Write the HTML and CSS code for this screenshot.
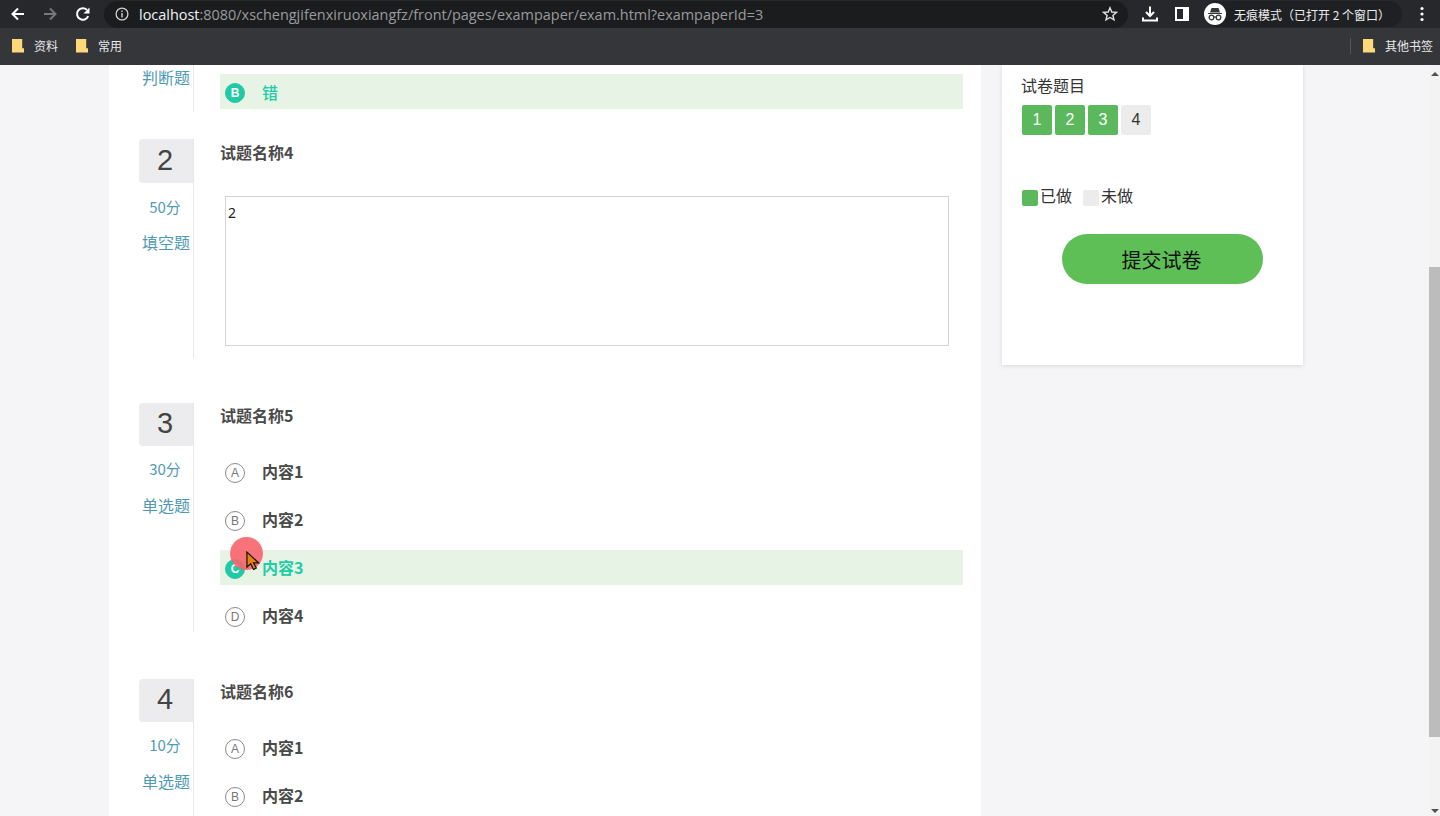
FILE: index.html
```html
<!DOCTYPE html>
<html lang="en">
<head>
  <meta charset="UTF-8">
  <title>exam</title>
  <link rel="stylesheet" href="styles.css">
</head>
<body>

  <div class="toolbar">
    <svg class="nav-icon" viewBox="0 0 16 16"><path d="M14 8H3M8 2.5 2.5 8 8 13.5" fill="none" stroke="#fff" stroke-width="2"/></svg>
    <svg class="nav-icon" viewBox="0 0 16 16"><path d="M2 8h11M8 2.5 13.5 8 8 13.5" fill="none" stroke="#77787b" stroke-width="2"/></svg>
    <svg class="nav-icon" viewBox="0 0 16 16"><path d="M13.2 10.2A5.8 5.8 0 1 1 12 3.9" fill="none" stroke="#fff" stroke-width="2"/><path d="M14.5 1.5v6h-6z" fill="#fff"/></svg>
    <div class="address">
      <svg class="info-icon" viewBox="0 0 14 14"><circle cx="7" cy="7" r="5.9" fill="none" stroke="#d0d1d3" stroke-width="1.3"/><path d="M6.3 6h1.4v4.4H6.3zM6.3 3.5h1.4v1.4H6.3z" fill="#d0d1d3"/></svg>
      <span class="url"><b>localhost</b>:8080/xschengjifenxiruoxiangfz/front/pages/exampaper/exam.html?exampaperId=3</span>
      <svg class="star-icon" viewBox="0 0 16 16"><path d="M8 1.8 9.8 6l4.6.4-3.5 3 1.1 4.5L8 11.5l-4 2.4 1.1-4.5-3.5-3L6.200 6z" fill="none" stroke="#dfe0e2" stroke-width="1.400"/></svg>
    </div>
    <svg class="tool-icon" viewBox="0 0 18 18"><path d="M9 1.500v9M5 7l4 4 4-4M2 12.500v3h14v-3" fill="none" stroke="#fff" stroke-width="2"/></svg>
    <svg class="tool-icon" viewBox="0 0 18 18"><path d="M3 3h12v12H3z" fill="none" stroke="#fff" stroke-width="2"/><path d="M10 3h5v12h-5z" fill="#fff"/></svg>
    <div class="incognito">
      <span class="incognito-face">
        <svg viewBox="0 0 20 20" width="20" height="20"><path d="M6.500 4h7l1.500 4.500H5zM3 9h14v1H3z" fill="#35363a"/><circle cx="6.500" cy="13.500" r="2.300" fill="none" stroke="#35363a" stroke-width="1.300"/><circle cx="13.500" cy="13.500" r="2.300" fill="none" stroke="#35363a" stroke-width="1.300"/><path d="M8.800 13h2.400" stroke="#35363a" stroke-width="1.200"/></svg>
      </span>
      <span>无痕模式（已打开 2 个窗口）</span>
    </div>
    <svg class="menu-icon" viewBox="0 0 4 16"><circle cx="2" cy="2.500" r="1.600" fill="#fff"/><circle cx="2" cy="8" r="1.600" fill="#fff"/><circle cx="2" cy="13.500" r="1.600" fill="#fff"/></svg>
  </div>

  <div class="bookmarks">
    <div class="bookmark"><i class="folder"></i>资料</div>
    <div class="bookmark"><i class="folder"></i>常用</div>
    <div class="bookmarks-right">
      <span class="divider"></span>
      <div class="bookmark"><i class="folder"></i>其他书签</div>
    </div>
  </div>

  <div class="viewport">
    <div class="page">
      <div class="main-card">

        <div class="question question-cut">
          <div class="q-side q-side-cut">
            <div class="q-type">判断题</div>
          </div>
          <div class="q-body">
            <div class="option option-first selected"><span class="letter">B</span><span class="option-text">错</span></div>
          </div>
        </div>

        <div class="question">
          <div class="q-side q-side-text">
            <div class="q-num">2</div>
            <div class="q-score">50分</div>
            <div class="q-type">填空题</div>
          </div>
          <div class="q-body">
            <div class="q-title q-title-text">试题名称4</div>
            <div class="answer-box">2</div>
          </div>
        </div>

        <div class="question">
          <div class="q-side">
            <div class="q-num">3</div>
            <div class="q-score">30分</div>
            <div class="q-type">单选题</div>
          </div>
          <div class="q-body">
            <div class="q-title">试题名称5</div>
            <div class="options">
              <div class="option"><span class="letter">A</span><span class="option-text">内容1</span></div>
              <div class="option"><span class="letter">B</span><span class="option-text">内容2</span></div>
              <div class="option selected"><span class="letter">C</span><span class="option-text">内容3</span></div>
              <div class="option"><span class="letter">D</span><span class="option-text">内容4</span></div>
            </div>
          </div>
        </div>

        <div class="question">
          <div class="q-side">
            <div class="q-num">4</div>
            <div class="q-score">10分</div>
            <div class="q-type">单选题</div>
          </div>
          <div class="q-body">
            <div class="q-title">试题名称6</div>
            <div class="options">
              <div class="option"><span class="letter">A</span><span class="option-text">内容1</span></div>
              <div class="option"><span class="letter">B</span><span class="option-text">内容2</span></div>
            </div>
          </div>
        </div>

      </div>

      <div class="side-card">
        <div class="side-title">试卷题目</div>
        <div class="num-list">
          <span class="num done">1</span>
          <span class="num done">2</span>
          <span class="num done">3</span>
          <span class="num">4</span>
        </div>
        <div class="legend">
          <i class="swatch done"></i><span>已做</span>
          <i class="swatch todo"></i><span>未做</span>
        </div>
        <button class="submit-btn">提交试卷</button>
      </div>
    </div>

    <div class="scrollbar">
      <span class="arrow-up"></span>
      <span class="thumb"></span>
      <span class="arrow-down"></span>
    </div>

    <!-- screen recorder pointer -->
    <div class="pointer-dot"></div>
    <svg class="pointer" viewBox="0 0 16 22"><path d="M1 1v16l4-3.500 3 6 3-1.500-3-5.500h5.500z" fill="#e8820c" stroke="#111" stroke-width="1.300"/></svg>
  </div>

</body>
</html>
```

FILE: styles.css
```css
* {
  box-sizing: border-box;
}

html, body {
  height: 100%;
}

body {
  margin: 0;
  display: flex;
  flex-direction: column;
  overflow: hidden;
  font-family: "Noto Sans CJK SC", "Liberation Sans", sans-serif;
  background: #f5f5f7;
}

/* browser chrome */
.toolbar {
  display: flex;
  align-items: center;
  height: 28px;
  padding-left: 10px;
  background: #27282b;
}

.nav-icon {
  width: 16px;
  height: 16px;
  margin-right: 17px;
}

.nav-icon:first-child {
  margin-right: 16px;
}

.address {
  display: flex;
  align-items: center;
  width: 1024px;
  height: 27px;
  margin-left: -4px;
  padding: 0 10px 0 11px;
  border-radius: 14px;
  background: #1b1c1e;
}

.info-icon {
  width: 14px;
  height: 14px;
  margin-right: 10px;
}

.url {
  flex: 1;
  font-family: "Open Sans", sans-serif;
  font-size: 14.45px;
  color: #9a9b9e;
  white-space: nowrap;
}

.url b {
  font-weight: 400;
  color: #f1f2f3;
}

.star-icon {
  width: 16px;
  height: 16px;
}

.tool-icon {
  width: 18px;
  height: 18px;
  margin-left: 14px;
}

.address + .tool-icon {
  margin-left: 13px;
}

.incognito {
  display: flex;
  align-items: center;
  gap: 8px;
  width: 198px;
  height: 26px;
  margin-left: 13px;
  border-radius: 13px;
  background: #1f2023;
  font-size: 12px;
  color: #eceded;
  white-space: nowrap;
}

.incognito-face {
  display: flex;
  align-items: center;
  justify-content: center;
  width: 22px;
  height: 22px;
  border-radius: 50%;
  background: #fff;
}

.menu-icon {
  width: 4px;
  height: 16px;
  margin-left: 18px;
}

.bookmarks {
  display: flex;
  align-items: center;
  height: 37px;
  padding: 0 7px 2px 12px;
  background: #35363a;
}

.bookmark {
  display: flex;
  align-items: center;
  margin-right: 18px;
  font-size: 12px;
  color: #e8eaed;
}

.folder {
  width: 12px;
  height: 14px;
  margin-right: 10px;
  background: #fdd97a;
  clip-path: polygon(0 0, 85% 0, 85% 70%, 100% 70%, 100% 100%, 0 100%);
}

.bookmarks-right {
  display: flex;
  align-items: center;
  margin-left: auto;
}

.bookmarks-right .bookmark {
  margin-right: 0;
}

.divider {
  width: 1px;
  height: 16px;
  margin-right: 12px;
  background: #55565a;
}

/* page */
.viewport {
  position: relative;
  display: flex;
  flex: 1;
  min-height: 0;
  overflow: hidden;
}

.page {
  display: flex;
  align-items: flex-start;
  flex: 1;
  gap: 21px;
  padding-left: 109px;
}

.main-card {
  width: 872px;
  height: 751px;
  padding-left: 30px;
  overflow: hidden;
  background: #fff;
}

.question {
  display: flex;
  margin-bottom: 45px;
}

.question-cut {
  margin-bottom: 27px;
}

.q-side {
  flex: none;
  width: 55px;
  height: 229px;
  border-right: 1px solid #e8e8e8;
  text-align: center;
}

.q-side-text {
  height: 219px;
}

.q-side-cut {
  height: 47px;
}

.q-side-cut .q-type {
  line-height: 25px;
}

.q-num {
  height: 43px;
  margin-bottom: 5px;
  padding-right: 2px;
  border-radius: 4px 0 0 4px;
  background: #ececee;
  font-family: "Liberation Sans", sans-serif;
  font-size: 29px;
  line-height: 41px;
  color: #444;
}

.q-side-text .q-num {
  height: 44px;
  margin-bottom: 6px;
  line-height: 43px;
}

.q-score,
.q-type {
  font-size: 15px;
  line-height: 36px;
  color: #4f9ab3;
}

.q-type {
  padding-right: 3px;
  font-size: 16px;
  text-align: right;
  white-space: nowrap;
}

.q-score {
  height: 36px;
  padding-right: 2px;
}

.q-side-text .q-score {
  height: 35px;
}

.q-body {
  width: 743px;
  margin-left: 26px;
}

.q-title {
  height: 27px;
  font-size: 16px;
  font-weight: 700;
  line-height: 25px;
  color: #4a4a4a;
}

.q-title-text {
  line-height: 27px;
}

.answer-box {
  width: 724px;
  height: 150px;
  margin: 30px 0 0 5px;
  padding: 6px 2px;
  border: 1px solid #d4d4d4;
  font-family: "Noto Sans", sans-serif;
  font-size: 14px;
  line-height: 20px;
  color: #222;
}

.options {
  margin-top: 24px;
  padding-bottom: 1px;
}

.option {
  display: flex;
  align-items: center;
  height: 35px;
  margin-bottom: 13px;
  padding-left: 5px;
  font-size: 16px;
  font-weight: 700;
  color: #4a4a4a;
}

.option:last-child {
  margin-bottom: 0;
}

.option-first {
  margin-top: 9px;
  font-weight: 500;
}

.option-text {
  margin-top: -2px;
}

.option-first .option-text {
  margin-top: 0;
}

.letter {
  display: flex;
  align-items: center;
  justify-content: center;
  width: 20px;
  height: 20px;
  margin: 3px 17px 0 0;
  border: 1px solid #8a8a8a;
  border-radius: 50%;
  font-family: "Liberation Sans", sans-serif;
  font-size: 12px;
  font-weight: 400;
  color: #777;
}

.selected {
  background: #e7f3e5;
  color: #21cca6;
}

.selected .letter {
  border-color: #21c9a5;
  background: #21c9a5;
  font-weight: 700;
  color: #fff;
}

/* right panel */
.side-card {
  width: 301px;
  height: 300px;
  padding: 8px 0 0 19px;
  background: #fff;
  box-shadow: 0 1px 4px rgba(0, 0, 0, 0.12);
}

.side-title {
  font-size: 16px;
  line-height: 24px;
  color: #333;
}

.num-list {
  display: flex;
  gap: 3px;
  margin: 8px 0 0 1px;
}

.num {
  width: 30px;
  height: 30px;
  border-radius: 2px;
  background: #ececec;
  font-family: "Liberation Sans", sans-serif;
  font-size: 16px;
  line-height: 30px;
  text-align: center;
  color: #333;
}

.num.done {
  background: #5cb85c;
  color: #fff;
}

.legend {
  display: flex;
  align-items: center;
  height: 24px;
  margin: 50px 0 0 1px;
  font-size: 16px;
  line-height: 22px;
  color: #333;
}

.legend span {
  margin-top: -4px;
}

.swatch {
  width: 16px;
  height: 16px;
  margin: 1px 2px 0 0;
  border-radius: 2px;
}

.swatch.done {
  background: #5cb85c;
}

.swatch.todo {
  margin-left: 11px;
  background: #ececec;
}

.submit-btn {
  display: block;
  width: 201px;
  height: 50px;
  margin: 25px 0 0 41px;
  padding: 0 2px 0 0;
  border: 0;
  border-radius: 25px;
  background: #5fbf57;
  font-family: inherit;
  font-size: 20px;
  color: #111;
}

/* scrollbar */
.scrollbar {
  display: flex;
  flex: none;
  flex-direction: column;
  align-items: center;
  width: 11px;
  background: #f3f3f4;
}

.arrow-up,
.arrow-down {
  width: 0;
  height: 0;
  border-left: 4px solid transparent;
  border-right: 4px solid transparent;
}

.arrow-up {
  margin-top: 7px;
  border-bottom: 4px solid #505050;
}

.arrow-down {
  margin-top: 72px;
  border-top: 4px solid #505050;
}

.thumb {
  width: 11px;
  height: 470px;
  margin-top: 191px;
  background: #bdbcbd;
}

/* recorder pointer */
.pointer-dot {
  position: absolute;
  left: 230px;
  top: 472px;
  width: 33px;
  height: 33px;
  border-radius: 50%;
  background: rgba(248, 100, 108, 0.9);
}

.pointer {
  position: absolute;
  left: 246px;
  top: 486px;
  width: 15px;
  height: 21px;
}
```
